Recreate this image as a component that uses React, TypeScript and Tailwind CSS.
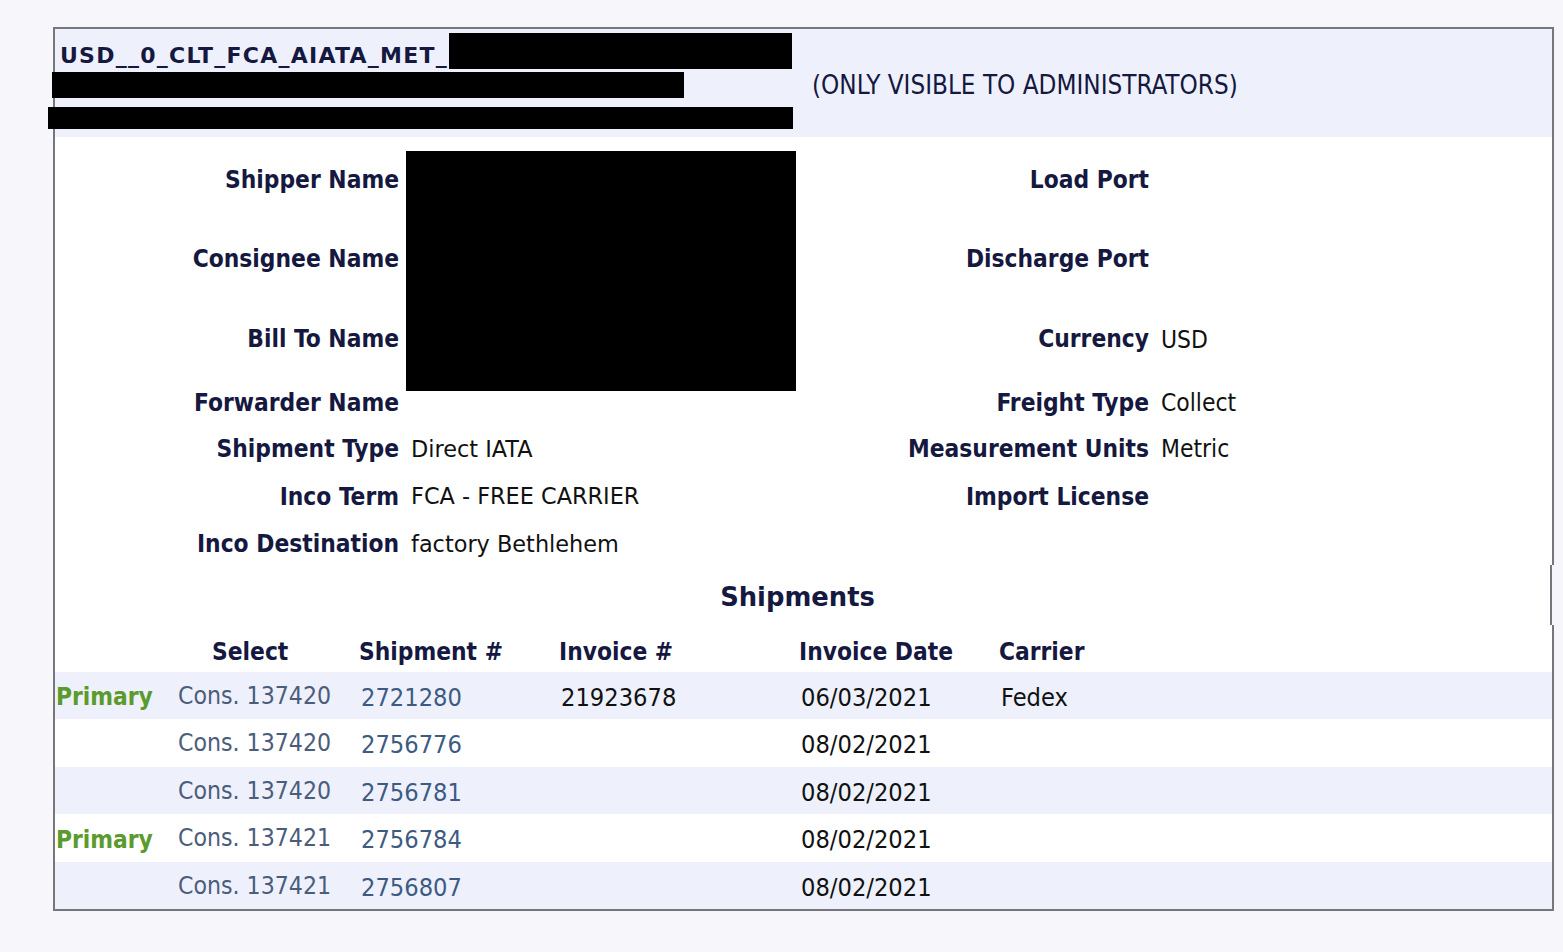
import React from "react";

const TAH = { fontFamily: "'DejaVu Sans Condensed', 'DejaVu Sans', sans-serif", fontStretch: "condensed" as const };
const VER = { fontFamily: "'DejaVu Sans', Verdana, sans-serif" };

type Field = { label: string; value?: string; verdana?: boolean };

const leftFields: Field[] = [
  { label: "Shipper Name" },
  { label: "Consignee Name" },
  { label: "Bill To Name" },
  { label: "Forwarder Name" },
  { label: "Shipment Type", value: "Direct IATA", verdana: true },
  { label: "Inco Term", value: "FCA - FREE CARRIER", verdana: true },
  { label: "Inco Destination", value: "factory Bethlehem", verdana: true },
];
const rightFields: Field[] = [
  { label: "Load Port" },
  { label: "Discharge Port" },
  { label: "Currency", value: "USD" },
  { label: "Freight Type", value: "Collect" },
  { label: "Measurement Units", value: "Metric" },
  { label: "Import License" },
  { label: "" },
];
const rowHeights = ["h-[79px]", "h-[79px]", "h-[80px]", "h-[46px]", "h-[47px]", "h-[48px]", "h-[47px]"];

const rows = [
  { primary: true, cons: "Cons. 137420", ship: "2721280", inv: "21923678", date: "06/03/2021", carrier: "Fedex" },
  { primary: false, cons: "Cons. 137420", ship: "2756776", inv: "", date: "08/02/2021", carrier: "" },
  { primary: false, cons: "Cons. 137420", ship: "2756781", inv: "", date: "08/02/2021", carrier: "" },
  { primary: true, cons: "Cons. 137421", ship: "2756784", inv: "", date: "08/02/2021", carrier: "" },
  { primary: false, cons: "Cons. 137421", ship: "2756807", inv: "", date: "08/02/2021", carrier: "" },
];
const rowH = ["h-[47px]", "h-[48px]", "h-[47px]", "h-[48px]", "h-[47px]"];

function Value({ f }: { f: Field }) {
  if (!f.value) return null;
  return f.verdana ? (
    <span className="relative top-[1px] text-[22.4px] text-[#111111]" style={VER}>
      {f.value}
    </span>
  ) : (
    <span className="relative top-[1px] text-[24.4px] text-[#111111]" style={TAH}>
      {f.value}
    </span>
  );
}

export default function App() {
  return (
    <div className="min-h-[952px] bg-[#f6f6fb] pt-[27px] pl-[53px]">
      <div className="relative w-[1501px] border-2 border-[#76777d] bg-white">
        {/* Header */}
        <div className="flex h-[108px] bg-[#eef1fb]">
          <div className="w-[757px] pl-[5px] pt-[10px]">
            <span className="text-[22px] font-bold tracking-[1.25px] text-[#15183f]" style={VER}>
              USD__0_CLT_FCA_AIATA_MET_
            </span>
          </div>
          <div className="flex items-center pt-[4px]">
            <span className="text-[25.8px] text-[#15183f]" style={TAH}>
              (ONLY VISIBLE TO ADMINISTRATORS)
            </span>
          </div>
        </div>

        {/* Fields */}
        <div className="pt-[4px]">
          {leftFields.map((lf, i) => {
            const rf = rightFields[i];
            const shift = i >= 3 ? "relative top-[1px]" : "";
            return (
              <div key={i} className={`flex items-center ${rowHeights[i]}`}>
                <div
                  className={`w-[344px] text-right text-[24.3px] font-bold text-[#15183f] ${shift}`}
                  style={TAH}
                >
                  {lf.label}
                </div>
                <div className="w-[406px] pl-[12px]">
                  <Value f={lf} />
                </div>
                <div
                  className={`w-[344px] text-right text-[24.3px] font-bold text-[#15183f] ${shift}`}
                  style={TAH}
                >
                  {rf.label}
                </div>
                <div className="flex-1 pl-[12px]">
                  <Value f={rf} />
                </div>
              </div>
            );
          })}
        </div>

        {/* Shipments title */}
        <div className="flex h-[60px] items-center justify-center pr-[12px]">
          <span className="text-[25.8px] font-bold text-[#15183f]" style={VER}>
            Shipments
          </span>
        </div>

        {/* Table */}
        <div style={TAH}>
          <div className="flex h-[45px] items-center pt-[5px] text-[24.3px] font-bold text-[#15183f]">
            <div className="w-[117px]" />
            <div className="w-[185px] pl-[40px]">Select</div>
            <div className="w-[200px] pl-[2px]">Shipment #</div>
            <div className="w-[240px] pl-[2px]">Invoice #</div>
            <div className="w-[200px] pl-[2px]">Invoice Date</div>
            <div className="flex-1 pl-[2px]">Carrier</div>
          </div>
          {rows.map((r, i) => (
            <div
              key={i}
              className={`flex items-center pt-[4px] text-[25.2px] ${rowH[i]} ${i % 2 === 0 ? "bg-[#eef1fb]" : "bg-white"}`}
            >
              <div className="w-[117px] pl-[1px] text-[24.3px] font-bold text-[#5b9a2c]">{r.primary ? "Primary" : ""}</div>
              <div className="-mt-[3px] w-[185px] pl-[6px] text-[24.6px] text-[#4b5d7b]">{r.cons}</div>
              <div className="w-[200px] pl-[4px] text-[#3d5b82]">{r.ship}</div>
              <div className="w-[240px] pl-[4px] text-[#111111]">{r.inv}</div>
              <div className="w-[200px] pl-[4px] text-[#111111]">{r.date}</div>
              <div className="flex-1 pl-[4px] text-[#111111]">{r.carrier}</div>
            </div>
          ))}
        </div>

        {/* Redactions */}
        <div className="absolute left-[394px] top-[4px] h-[36px] w-[343px] bg-black" />
        <div className="absolute left-[-3px] top-[43px] h-[26px] w-[632px] bg-black" />
        <div className="absolute left-[-7px] top-[78px] h-[22px] w-[745px] bg-black" />
        <div className="absolute left-[351px] top-[122px] h-[240px] w-[390px] bg-black" />

        {/* border glitch on right edge */}
        <div className="absolute left-[1495px] top-[536px] h-[60px] w-[2px] bg-[#76777d]" />
        <div className="absolute left-[1497px] top-[536px] h-[60px] w-[2px] bg-[#f6f6fb]" />
      </div>
    </div>
  );
}
